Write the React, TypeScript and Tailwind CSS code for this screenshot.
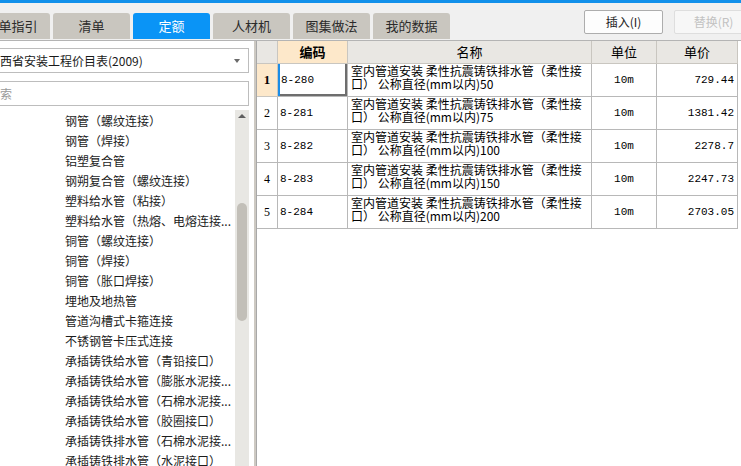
import React from "react";

const tabs = ["清单指引", "清单", "定额", "人材机", "图集做法", "我的数据"];
const tree = [
  "钢管（螺纹连接）",
  "钢管（焊接）",
  "铝塑复合管",
  "钢朔复合管（螺纹连接）",
  "塑料给水管（粘接）",
  "塑料给水管（热熔、电熔连接...",
  "铜管（螺纹连接）",
  "铜管（焊接）",
  "铜管（胀口焊接）",
  "埋地及地热管",
  "管道沟槽式卡箍连接",
  "不锈钢管卡压式连接",
  "承插铸铁给水管（青铅接口）",
  "承插铸铁给水管（膨胀水泥接...",
  "承插铸铁给水管（石棉水泥接...",
  "承插铸铁给水管（胶圈接口）",
  "承插铸铁排水管（石棉水泥接...",
  "承插铸铁排水管（水泥接口）",
];
const rows = [
  { code: "8-280", size: "50", price: "729.44" },
  { code: "8-281", size: "75", price: "1381.42" },
  { code: "8-282", size: "100", price: "2278.7" },
  { code: "8-283", size: "150", price: "2247.73" },
  { code: "8-284", size: "200", price: "2703.05" },
];

const cjk = { fontFamily: '"Noto Sans CJK SC", "Noto Sans", sans-serif' };
const mono = { fontFamily: '"Liberation Mono", "Noto Sans CJK SC", monospace' };

export default function App() {
  return (
    <div className="w-[741px] h-[466px] overflow-hidden bg-white flex flex-col text-black" style={cjk}>
      <div className="h-[3px] bg-[#1190ea]" />
      <div className="h-[37px] bg-[#f0f0f0] flex justify-between">
        <div className="flex items-end gap-[3px] ml-[-27px] pb-[1px]">
          {tabs.map((t) => (
            <div
              key={t}
              className={
                t === "定额"
                  ? "w-[77px] h-[26px] rounded-t-[3px] bg-[#0a94f6] text-white text-[13px] flex items-center justify-center"
                  : "w-[77px] h-[26px] rounded-t-[3px] bg-[#c9c6bf] text-[#2b2b2b] text-[13px] flex items-center justify-center"
              }
            >
              {t}
            </div>
          ))}
        </div>
        <div className="flex items-start gap-[11px] mt-[7px] mr-[-12px]">
          <div className="w-[79px] h-[24px] border border-[#adadad] rounded-[2px] bg-[#fdfdfd] text-[12px] text-[#222] flex items-center justify-center">
            插入(I)
          </div>
          <div className="w-[79px] h-[24px] border border-[#dedede] rounded-[2px] bg-[#f7f7f7] text-[12px] text-[#c2c2c2] flex items-center justify-center">
            替换(R)
          </div>
        </div>
      </div>
      <div className="flex flex-1 min-h-0 border-t border-[#b4b4b4]">
        {/* left panel */}
        <div className="w-[274px] ml-[-20px] shrink-0 flex flex-col pt-[7px] bg-white">
          <div className="ml-[2px] mr-[5px] h-[25px] border border-[#bdbdbd] bg-white pl-[5px] pr-[8px] flex items-center justify-between text-[12px] text-[#1a1a1a]">
            <span>广西省安装工程价目表(2009)</span>
            <span className="w-0 h-0 border-l-[3.5px] border-r-[3.5px] border-t-[4px] border-l-transparent border-r-transparent border-t-[#6a6a6a]" />
          </div>
          <div className="ml-[2px] mr-[5px] mt-[8px] h-[25px] border border-[#bdbdbd] bg-white pl-[5px] flex items-center text-[12px] text-[#9a9a9a]">
            搜索
          </div>
          <div className="flex flex-1 min-h-0 mt-[4px] mr-[5px]">
            <div className="flex-1 pl-[85px] pt-[1px] overflow-hidden">
              {tree.map((t) => (
                <div key={t} className="h-[20px] leading-[20px] text-[12px] text-[#1c1c1c] whitespace-nowrap">
                  {t}
                </div>
              ))}
            </div>
            <div className="w-[14px] bg-[#e8e7e3] flex flex-col items-center">
              <span className="mt-[4px] w-0 h-0 border-l-[4px] border-r-[4px] border-b-[4px] border-l-transparent border-r-transparent border-b-[#5f5f5f]" />
              <div className="mt-[85px] w-[10px] h-[118px] rounded-[5px] bg-[#c2bfb8]" />
            </div>
          </div>
        </div>
        <div className="w-[2px] bg-[#cdc9c2] shrink-0" />
        {/* table */}
        <div className="flex-1 bg-white border-l border-[#a8a8a8]">
          <div className="flex h-[23px] text-[13px]">
            <div className="w-[21px] bg-[#e9e7e3] border-r border-b border-[#c9c6c0]" />
            <div className="w-[70px] bg-[#fde8ca] border-r border-b border-[#c9c6c0] font-bold flex items-center justify-center">编码</div>
            <div className="w-[244px] bg-[#e9e7e3] border-r border-b border-[#c9c6c0] flex items-center justify-center">名称</div>
            <div className="w-[65px] bg-[#e9e7e3] border-r border-b border-[#c9c6c0] flex items-center justify-center">单位</div>
            <div className="w-[81px] bg-[#e9e7e3] border-r border-b border-[#c9c6c0] flex items-center justify-center">单价</div>
          </div>
          {rows.map((r, i) => (
            <div key={r.code} className="flex h-[33px]">
              <div
                className={
                  i === 0
                    ? "w-[21px] bg-[#fde8ca] border-r border-b border-[#c9c6c0] flex items-center justify-center text-[13px] font-bold"
                    : "w-[21px] bg-white border-r border-b border-[#b8b8b8] flex items-center justify-center text-[12px]"
                }
                style={{ fontFamily: '"Liberation Serif", serif' }}
              >
                {i + 1}
              </div>
              <div
                className={
                  i === 0
                    ? "w-[70px] border-b border-r border-[#b8b8b8] flex items-center pl-[3px] text-[11px] shadow-[inset_2px_0_0_#1b8de6,inset_-2px_-2px_0_#6e6e6e]"
                    : "w-[70px] border-b border-r border-[#b8b8b8] flex items-center pl-[2px] text-[11px]"
                }
                style={mono}
              >
                {r.code}
              </div>
              <div className="w-[244px] border-b border-r border-[#b8b8b8] pl-[3px] text-[12px] leading-[13px] whitespace-nowrap overflow-hidden">
                <div>室内管道安装 柔性抗震铸铁排水管（柔性接</div>
                <div>口） 公称直径(mm以内){r.size}</div>
              </div>
              <div className="w-[65px] border-b border-r border-[#b8b8b8] flex items-center justify-center text-[11px]" style={mono}>
                10m
              </div>
              <div className="w-[81px] border-b border-r border-[#b8b8b8] flex items-center justify-end pr-[3px] text-[11px]" style={mono}>
                {r.price}
              </div>
            </div>
          ))}
        </div>
      </div>
    </div>
  );
}
